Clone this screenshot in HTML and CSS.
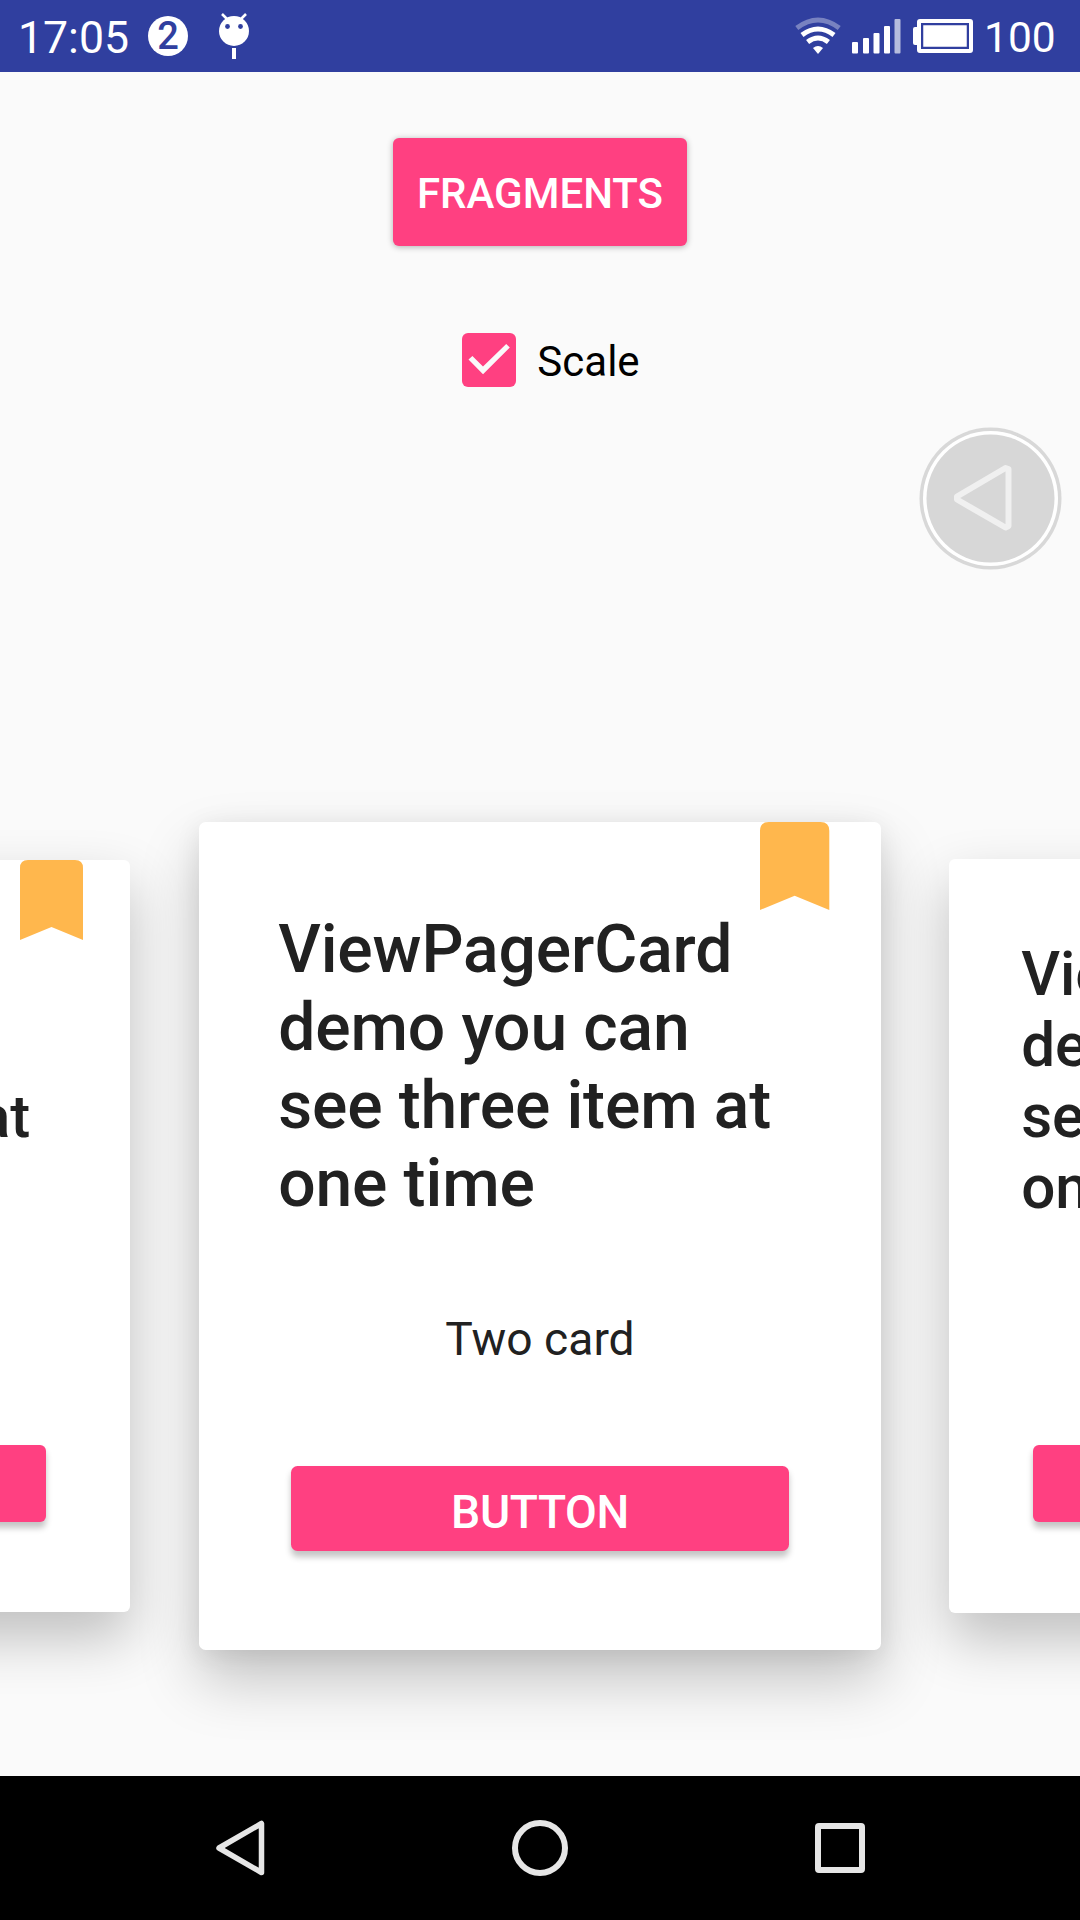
FILE: index.html
```html
<!DOCTYPE html>
<html lang="en">
<head>
<meta charset="utf-8">
<title>ViewPagerCard</title>
<link rel="stylesheet" href="styles.css">
</head>
<body>
<div class="screen">
  <header class="status">
    <span class="clock">17:05</span>
    <span class="count">2</span>
    <svg class="droid" width="32" height="50" viewBox="0 0 32 50">
      <path d="M4 3l6 6M28 3l-6 6" stroke="#fff" stroke-width="2.6"/>
      <circle cx="16" cy="20" r="15" fill="#fff"/>
      <circle cx="9.5" cy="15.5" r="2.4" fill="#303f9f"/>
      <circle cx="22.5" cy="15.5" r="2.4" fill="#303f9f"/>
      <path d="M14 37h4v11h-4z" fill="#fff"/>
    </svg>
    <svg class="radio" width="108" height="38" viewBox="0 0 108 38">
      <g fill="none" stroke="#fff">
        <path d="M1.800 11Q23-5 44.200 11" stroke-width="5" opacity=".35"/>
        <path d="M7 18Q23 6 39 18" stroke-width="5"/>
        <path d="M12.600 25Q23 17 33.400 25" stroke-width="5"/>
      </g>
      <path d="M18 31Q23 27 28 31L23 37z" fill="#fff"/>
      <g fill="#fff">
        <rect x="57" y="25" width="6" height="11.500" rx="1"/>
        <rect x="68" y="21" width="6" height="15.500" rx="1"/>
        <rect x="78.500" y="16" width="6" height="20.500" rx="1"/>
        <rect x="89" y="9" width="6" height="27.500" rx="1"/>
        <rect x="99.500" y="2" width="6" height="34.500" rx="1" opacity=".65"/>
      </g>
    </svg>
    <svg class="battery" width="60" height="34" viewBox="0 0 60 34">
      <rect x="6" y="2" width="52" height="30" rx="1" fill="none" stroke="#fff" stroke-width="4"/>
      <rect x="0" y="8" width="6" height="18" rx="2" fill="#fff"/>
      <rect x="10" y="6" width="44" height="22" fill="#fff"/>
      <rect x="9.500" y="5.500" width="45" height="23" fill="none" stroke="#303f9f" stroke-width="1.500"/>
    </svg>
    <span class="level">100</span>
  </header>

  <main class="content">
    <section class="controls">
      <button class="fragments">FRAGMENTS</button>
      <label class="scale">
        <svg width="54" height="54" viewBox="0 0 54 54">
          <rect width="54" height="54" rx="6" fill="#ff4081"/>
          <path d="M6.500 26.400L21 41.300L47.800 14.400L44.200 10.900L21 33.500L10.400 22.900z" fill="#fafafa"/>
        </svg>
        <span>Scale</span>
      </label>
    </section>

    <section class="pager">
      <article class="card">
        <svg class="mark" viewBox="0 0 63 80"><path d="M0 80V8Q0 0 8 0H55Q63 0 63 8V80L31.500 67z" fill="#ffb74d"/></svg>
        <h2>ViewPagerCard demo you can see three item at one time</h2>
        <p>One card</p>
        <button>BUTTON</button>
      </article>
      <article class="card current">
        <svg class="mark" viewBox="0 0 63 80"><path d="M0 80V8Q0 0 8 0H55Q63 0 63 8V80L31.500 67z" fill="#ffb74d"/></svg>
        <h2>ViewPagerCard demo you can see three item at one time</h2>
        <p>Two card</p>
        <button>BUTTON</button>
      </article>
      <article class="card next">
        <svg class="mark" viewBox="0 0 63 80"><path d="M0 80V8Q0 0 8 0H55Q63 0 63 8V80L31.500 67z" fill="#ffb74d"/></svg>
        <h2>ViewPagerCard demo you can see three item at one time</h2>
        <p>Three card</p>
        <button>BUTTON</button>
      </article>
    </section>
  </main>

  <nav class="navbar">
    <svg width="50" height="58" viewBox="0 0 50 58"><path d="M46.500 4.500V53.500L4 29z" fill="none" stroke="#e6e6e6" stroke-width="5.500" stroke-linejoin="round"/></svg>
    <svg width="58" height="58" viewBox="0 0 58 58"><circle cx="29" cy="29" r="25" fill="none" stroke="#e6e6e6" stroke-width="6"/></svg>
    <svg width="50" height="50" viewBox="0 0 50 50"><rect x="3" y="3" width="44" height="44" rx="1" fill="none" stroke="#e6e6e6" stroke-width="6" stroke-linejoin="round"/></svg>
  </nav>

  <svg class="float" width="144" height="144" viewBox="0 0 144 144">
    <circle cx="71.500" cy="71.500" r="71" fill="#d8d8d8"/>
    <circle cx="71.500" cy="71.500" r="67.500" fill="#fff"/>
    <circle cx="71.500" cy="71.500" r="64" fill="#d7d7d7"/>
    <path d="M89.500 42L86.500 41L38 69.500V72.500L86.500 100.500L89.500 99z" fill="none" stroke="#f0f0f0" stroke-width="6" stroke-linejoin="round"/>
  </svg>
</div>
</body>
</html>
```
FILE: styles.css
```css
* { box-sizing: border-box; margin: 0; padding: 0; }

body { font-family: Roboto, sans-serif; background: #fafafa; }

button { border: 0; font-family: inherit; font-weight: 500; color: #fff; background: #ff4081; }

svg { display: block; flex: none; }

.screen {
  position: relative;
  display: flex;
  flex-direction: column;
  width: 1080px;
  height: 1920px;
  overflow: hidden;
}

.status {
  display: flex;
  align-items: center;
  height: 72px;
  padding: 0 26px 0 18px;
  background: #303f9f;
  color: #fff;
}

.clock { width: 130px; font-size: 44.6px; line-height: 70px; padding-top: 4px; }

.count {
  width: 40px;
  height: 40px;
  border-radius: 50%;
  background: #fff;
  color: #303f9f;
  font-size: 38px;
  font-weight: 500;
  line-height: 40px;
  text-align: center;
}

.droid { margin: 0 0 0 30px; }

.radio { margin-left: auto; }

.battery { margin-left: 10px; }

.level { width: 70px; margin-left: 11px; font-size: 42.5px; line-height: 70px; padding-top: 4px; }

.content { height: 1704px; }

.controls {
  display: flex;
  flex-direction: column;
  align-items: center;
  height: 624px;
  padding-top: 66px;
}

.fragments {
  width: 294px;
  height: 108px;
  padding-top: 2px;
  border-radius: 6px;
  font-size: 42px;
  box-shadow: 0 1px 6px rgba(0, 0, 0, .3);
}

.scale {
  display: flex;
  align-items: center;
  gap: 21px;
  margin: 87px 0 0 22px;
  font-size: 42px;
  color: #000;
}

.scale span { padding-top: 3px; line-height: 50px; }

.pager {
  display: flex;
  align-items: center;
  height: 1080px;
  margin-left: -490px;
  overflow: hidden;
}

/* Card lengths are in em, so the font size sets the page's zoom. */
.card {
  position: relative;
  flex: none;
  display: flex;
  flex-direction: column;
  align-items: center;
  width: 62em;
  height: 75.2em;
  padding: 8em 7.2em 0;
  border-radius: .6em;
  background: #fff;
  color: #212121;
  font-size: 10px;
  box-shadow: 0 26px 56px rgba(0, 0, 0, .24);
}

.current {
  z-index: 1;
  margin-left: 69px;
  padding-top: 8.08em;
  font-size: 11px;
  box-shadow: 0 30px 60px rgba(0, 0, 0, .22), 0 4px 26px rgba(0, 0, 0, .08);
}

.next { margin-left: 68px; padding-top: 7.95em; font-size: 10.03px; }

.mark { position: absolute; top: 0; right: 4.66em; width: 6.3em; height: 8em; }

.card h2 {
  align-self: stretch;
  font-size: 6em;
  font-weight: 500;
  line-height: 1.182;
  letter-spacing: -.002em;
}

.card p { margin-top: 1.91em; font-size: 4.2em; line-height: 1.17; }

.card button {
  width: 10.78em;
  height: 1.84em;
  margin-top: 2.18em;
  padding-top: .16em;
  border-radius: .14em;
  font-size: 4.2em;
  letter-spacing: -.008em;
  box-shadow: 0 .12em .14em rgba(0, 0, 0, .23);
}

.navbar {
  display: flex;
  align-items: center;
  height: 144px;
  padding-left: 215px;
  background: #000;
}

.navbar svg + svg { margin-left: 246px; }

.float { position: absolute; left: 919px; top: 427px; }
```
